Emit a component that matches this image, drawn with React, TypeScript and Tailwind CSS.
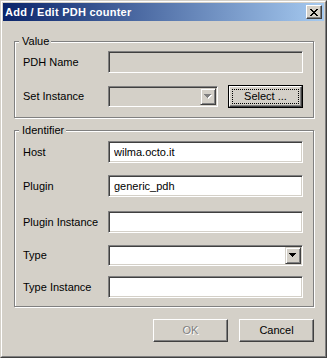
import React, { ReactNode } from 'react';

// classic win2000 3D edges
const raised =
  'border border-t-white border-l-white border-r-[#404040] border-b-[#404040] shadow-[inset_-1px_-1px_0_#808080]';
const sunken =
  'border border-t-[#808080] border-l-[#808080] border-r-white border-b-white shadow-[inset_1px_1px_0_#404040,inset_-1px_-1px_0_#d4d0c8]';

const CloseGlyph = () => (
  <svg width="8" height="7" viewBox="0 0 8 7" shapeRendering="crispEdges">
    <path
      fill="#000"
      d="M0 0h2v1H0z M6 0h2v1H6z M1 1h2v1H1z M5 1h2v1H5z M2 2h4v1H2z M3 3h2v1H3z M2 4h4v1H2z M1 5h2v1H1z M5 5h2v1H5z M0 6h2v1H0z M6 6h2v1H6z"
    />
  </svg>
);

const ArrowGlyph = ({ disabled }: { disabled?: boolean }) => (
  <svg width="8" height="5" viewBox="0 0 8 5" shapeRendering="crispEdges">
    {disabled && (
      <path fill="#fff" d="M1 1h7v1H1z M2 2h5v1H2z M3 3h3v1H3z M4 4h1v1H4z" />
    )}
    <path
      fill={disabled ? '#808080' : '#000'}
      d="M0 0h7v1H0z M1 1h5v1H1z M2 2h3v1H2z M3 3h1v1H3z"
    />
  </svg>
);

interface GroupProps {
  label: string;
  className?: string;
  children: ReactNode;
}

const Group = ({ label, className, children }: GroupProps) => (
  <div
    className={`relative w-[300px] border border-[#808080] shadow-[inset_1px_1px_0_#fff,1px_1px_0_#fff] pl-[8px] ${className ?? ''}`}
  >
    <span className="absolute -top-[7px] left-[4px] pl-[3px] pr-[2px] leading-[13px] bg-[#d4d0c8]">
      {label}
    </span>
    {children}
  </div>
);

const Row = ({ label, className, children }: { label: string; className?: string; children: ReactNode }) => (
  <div className={`flex items-center ${className ?? ''}`}>
    <span className="w-[85px] leading-[13px]">{label}</span>
    {children}
  </div>
);

const TextField = ({ value = '', disabled = false }: { value?: string; disabled?: boolean }) => (
  <input
    readOnly
    value={value}
    className={`h-[22px] w-[195px] pl-[5px] outline-none leading-[13px] ${sunken} ${disabled ? 'bg-[#d4d0c8]' : 'bg-white'}`}
  />
);

const Combo = ({ width, disabled = false }: { width: string; disabled?: boolean }) => (
  <div
    className={`h-[21px] ${width} p-px flex justify-end border border-t-[#808080] border-l-[#808080] border-r-white border-b-white shadow-[inset_1px_1px_0_#404040,inset_-1px_-1px_0_#d4d0c8] ${disabled ? 'bg-[#d4d0c8]' : 'bg-white'}`}
  >
    <div className="w-[16px] h-full flex items-center justify-center bg-[#d4d0c8] border border-t-[#d4d0c8] border-l-[#d4d0c8] border-r-[#404040] border-b-[#404040] shadow-[inset_1px_1px_0_#fff,inset_-1px_-1px_0_#808080]">
      <ArrowGlyph disabled={disabled} />
    </div>
  </div>
);

const PushButton = ({ label, disabled = false }: { label: string; disabled?: boolean }) => (
  <button
    className={`w-[75px] h-[23px] bg-[#d4d0c8] leading-[13px] ${raised} ${disabled ? 'text-[#808080] [text-shadow:1px_1px_0_#fff]' : 'text-black'}`}
  >
    {label}
  </button>
);

export default function App() {
  return (
    <div className="w-[327px] h-[358px] border border-t-[#d4d0c8] border-l-[#d4d0c8] border-r-[#404040] border-b-[#404040] font-['Liberation_Sans',Arial,sans-serif] text-[11px] text-black">
      <div className="h-full p-px bg-[#d4d0c8] border border-t-white border-l-white border-r-[#808080] border-b-[#808080] flex flex-col">
        {/* title bar */}
        <div className="h-[18px] px-[2px] flex items-center bg-linear-to-r/srgb from-[#0a246a] to-[#a6caf0]">
          <span className="flex-1 font-bold text-white tracking-[0.25px] leading-[13px]">
            Add / Edit PDH counter
          </span>
          <button className={`w-[16px] h-[14px] bg-[#d4d0c8] flex items-center justify-center ${raised}`}>
            <CloseGlyph />
          </button>
        </div>

        <div className="pl-[11px] pt-[20px] flex flex-col">
          <Group label="Value" className="h-[77px] pt-[9px]">
            <Row label="PDH Name">
              <TextField disabled />
            </Row>
            <Row label="Set Instance" className="mt-[12px]">
              <Combo width="w-[110px]" disabled />
              <button className="relative ml-[10px] w-[75px] h-[23px] border border-black bg-[#d4d0c8]">
                <span className="flex h-full w-full items-center justify-center border border-t-white border-l-white border-r-[#404040] border-b-[#404040] shadow-[inset_-1px_-1px_0_#808080] leading-[13px]">
                  Select ...
                </span>
                <span className="absolute inset-[3px] border border-dotted border-black" />
              </button>
            </Row>
          </Group>

          <Group label="Identifier" className="mt-[12px] h-[177px] pt-[10px]">
            <Row label="Host">
              <TextField value="wilma.octo.it" />
            </Row>
            <Row label="Plugin" className="mt-[12px]">
              <TextField value="generic_pdh" />
            </Row>
            <Row label="Plugin Instance" className="mt-[14px]">
              <TextField />
            </Row>
            <Row label="Type" className="mt-[12px]">
              <Combo width="w-[195px]" />
            </Row>
            <Row label="Type Instance" className="mt-[10px]">
              <TextField />
            </Row>
          </Group>

          <div className="w-[300px] mt-[12px] flex justify-end gap-[11px]">
            <PushButton label="OK" disabled />
            <PushButton label="Cancel" />
          </div>
        </div>
      </div>
    </div>
  );
}
